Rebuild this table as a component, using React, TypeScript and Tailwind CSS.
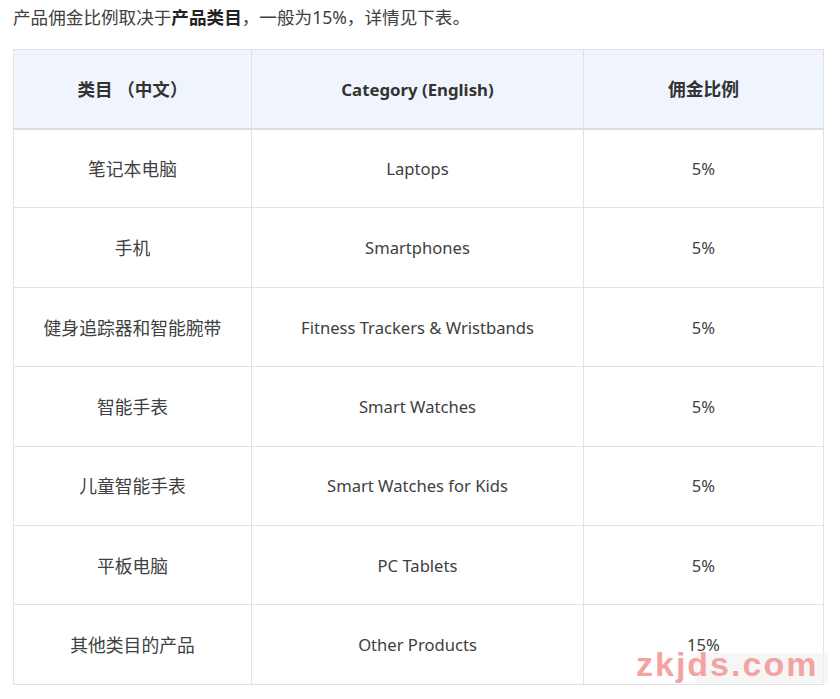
const rows = [
  { zh: '笔记本电脑', en: 'Laptops', rate: '5%' },
  { zh: '手机', en: 'Smartphones', rate: '5%' },
  { zh: '健身追踪器和智能腕带', en: 'Fitness Trackers & Wristbands', rate: '5%' },
  { zh: '智能手表', en: 'Smart Watches', rate: '5%' },
  { zh: '儿童智能手表', en: 'Smart Watches for Kids', rate: '5%' },
  { zh: '平板电脑', en: 'PC Tablets', rate: '5%' },
  { zh: '其他类目的产品', en: 'Other Products', rate: '15%' },
];

export default function App() {
  return (
    <div
      className="relative h-[699px] w-[840px] overflow-hidden bg-white pl-[13px] pr-[17px] text-[16.6px] text-[#404040]"
      style={{ fontFamily: '"Noto Sans", "Noto Sans CJK SC", sans-serif' }}
    >
      <p className="pt-[4px] text-[17.6px] leading-[27px]">
        产品佣金比例取决于<strong className="font-bold text-[#222]">产品类目</strong>，一般为15%，详情见下表。
      </p>

      <table className="mt-[18px] w-[810px] table-fixed border-collapse border border-[#e2e2e2]">
        <colgroup>
          <col className="w-[238px]" />
          <col className="w-[332px]" />
          <col className="w-[240px]" />
        </colgroup>
        <thead>
          <tr className="h-[79px] border-b-2 border-[#dedede] bg-[#f0f5fd]">
            <th className="border-r border-[#e2e2e2] pt-[1px] text-[17.6px] font-bold text-[#333]">类目 （中文）</th>
            <th className="border-r border-[#e2e2e2] pt-[1px] text-[16.8px] font-bold text-[#333]">Category (English)</th>
            <th className="pt-[1px] text-[17.8px] font-bold text-[#333]">佣金比例</th>
          </tr>
        </thead>
        <tbody>
          {rows.map((r) => (
            <tr key={r.en} className="h-[79.4px] border-b border-[#e2e2e2]">
              <td className="border-r border-[#e2e2e2] pt-[2px] text-center text-[17.8px]">{r.zh}</td>
              <td className="border-r border-[#e2e2e2] pt-[2px] text-center">{r.en}</td>
              <td className="pt-[2px] text-center">{r.rate}</td>
            </tr>
          ))}
        </tbody>
      </table>

      <div className="absolute left-[695px] top-[653px] h-[30px] w-[133px] bg-[#f2f2f2]/70" />
      <span
        className="absolute left-[636px] top-[644px] text-[34px] font-bold leading-[40px] tracking-[2px] text-[#f4a3a3]"
        style={{ fontFamily: '"Liberation Sans", sans-serif' }}
      >
        zkjds.com
      </span>
    </div>
  );
}
